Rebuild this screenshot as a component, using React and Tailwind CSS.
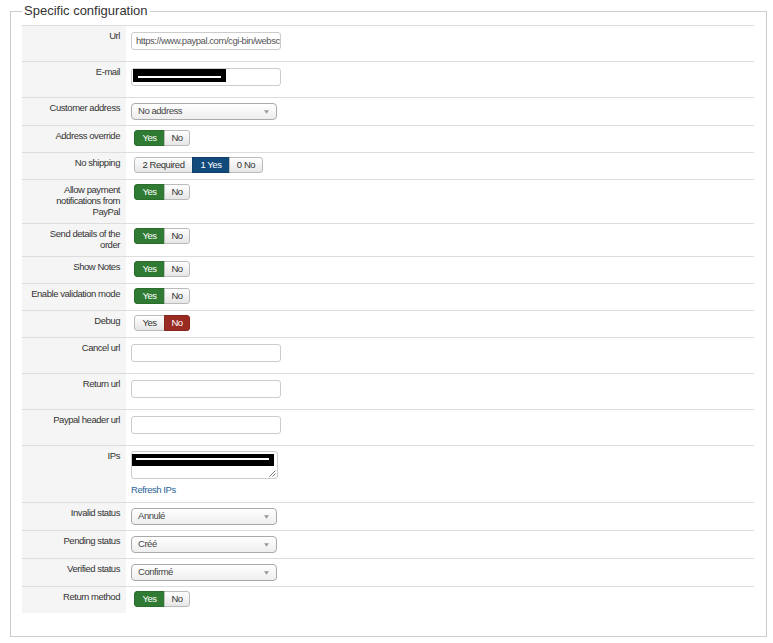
import React from 'react';

// Shared condensed text style for labels and controls
const small = "font-['Liberation_Sans',Arial,sans-serif] text-[9.5px] tracking-[-0.45px]";

function Row({ label, h, children }) {
  return (
    <div className={`flex border-t border-[#dddddd] ${h}`}>
      <div className={`w-[104px] shrink-0 whitespace-nowrap bg-[#f5f5f5] pr-[6px] pt-[4px] text-right leading-[11px] text-[#333] ${small}`}>
        {label}
      </div>
      <div className="flex-1 pl-[5px]">{children}</div>
    </div>
  );
}

function TextInput({ value, children }) {
  return (
    <div className={`mt-[6px] h-[18px] w-[150px] overflow-hidden whitespace-nowrap rounded-[3px] border border-[#cccccc] bg-white pl-[4px] leading-[15px] text-[#555] ${small}`}>
      {value}
      {children}
    </div>
  );
}

function Select({ value }) {
  return (
    <div className={`mt-[5px] flex h-[17px] w-[146px] items-center justify-between rounded-[4px] border border-[#aaaaaa] bg-gradient-to-b from-white to-[#eeeeee] pl-[6px] pr-[7px] text-[#444] ${small}`}>
      <span>{value}</span>
      <svg width="5" height="4" viewBox="0 0 6 4">
        <path d="M0 0 L6 0 L3 4 Z" fill="#999" />
      </svg>
    </div>
  );
}

function Toggle({ options }) {
  return (
    <div className="ml-[3px] mt-[4px] flex h-[16px]">
      {options.map((o, i) => {
        const tone =
          o.tone === 'green'
            ? 'bg-[#2f7b33] border-[#2a6d2d] text-white'
            : o.tone === 'blue'
            ? 'bg-[#124a7b] border-[#0f3f69] text-white'
            : o.tone === 'red'
            ? 'bg-[#992b23] border-[#87251f] text-white'
            : 'bg-gradient-to-b from-white to-[#e6e6e6] border-[#bbbbbb] text-[#333]';
        const round =
          i === 0 ? 'rounded-l-[3px]' : i === options.length - 1 ? 'rounded-r-[3px] -ml-px' : '-ml-px';
        return (
          <div
            key={i}
            style={{ width: o.w }}
            className={`flex items-center justify-center border leading-[14px] ${small} ${tone} ${round}`}
          >
            {o.text}
          </div>
        );
      })}
    </div>
  );
}

const yesOn = [
  { text: 'Yes', w: 31, tone: 'green' },
  { text: 'No', w: 26 },
];

export default function App() {
  return (
    <div className="h-[643px] w-[773px] overflow-hidden bg-white pt-[2px] font-['Liberation_Sans',Arial,sans-serif]">
      <fieldset className="ml-[10px] w-[757px] border border-[#cccccc] pb-[23px]">
        <legend className="ml-[11px] px-[2px] pb-[2px] pt-[1px] text-[13px] leading-[15px] text-[#333]">
          Specific configuration
        </legend>
        <div className="ml-[11px] mt-[5px] w-[732px]">
          <Row label="Url" h="h-[36px]">
            <TextInput value="https://www.paypal.com/cgi-bin/webscr" />
          </Row>
          <Row label="E-mail" h="h-[36px]">
            <div className="mt-[6px] h-[18px] w-[150px] rounded-[3px] border border-[#cccccc] bg-white">
              <div className="ml-px h-[13px] w-[93px] bg-black pt-[7px]">
                <div className="ml-[5px] h-[2px] w-[83px] bg-white" />
              </div>
            </div>
          </Row>
          <Row label="Customer address" h="h-[28px]">
            <Select value="No address" />
          </Row>
          <Row label="Address override" h="h-[27px]">
            <Toggle options={yesOn} />
          </Row>
          <Row label="No shipping" h="h-[27px]">
            <Toggle
              options={[
                { text: '2 Required', w: 59 },
                { text: '1 Yes', w: 38, tone: 'blue' },
                { text: '0 No', w: 34 },
              ]}
            />
          </Row>
          <Row
            label={
              <>
                Allow payment
                <br />
                notifications from
                <br />
                PayPal
              </>
            }
            h="h-[44px]"
          >
            <Toggle options={yesOn} />
          </Row>
          <Row
            label={
              <>
                Send details of the
                <br />
                order
              </>
            }
            h="h-[33px]"
          >
            <Toggle options={yesOn} />
          </Row>
          <Row label="Show Notes" h="h-[27px]">
            <Toggle options={yesOn} />
          </Row>
          <Row label="Enable validation mode" h="h-[27px]">
            <Toggle options={yesOn} />
          </Row>
          <Row label="Debug" h="h-[27px]">
            <Toggle
              options={[
                { text: 'Yes', w: 31 },
                { text: 'No', w: 26, tone: 'red' },
              ]}
            />
          </Row>
          <Row label="Cancel url" h="h-[36px]">
            <TextInput value="" />
          </Row>
          <Row label="Return url" h="h-[36px]">
            <TextInput value="" />
          </Row>
          <Row label="Paypal header url" h="h-[36px]">
            <TextInput value="" />
          </Row>
          <Row label="IPs" h="h-[57px]">
            <div className="relative mt-[5px] h-[28px] w-[147px] rounded-[3px] border border-[#cccccc] bg-white pt-[2px]">
              <div className="h-[12px] w-[142px] bg-black pt-[4px]">
                <div className="ml-[4px] h-[2px] w-[133px] bg-white" />
              </div>
              <svg className="absolute bottom-[1px] right-[1px]" width="7" height="7" viewBox="0 0 7 7">
                <path d="M6.5 0.5 L0.5 6.5 M6.5 3.5 L3.5 6.5" stroke="#777" strokeWidth="1" />
              </svg>
            </div>
            <div className={`mt-[5px] leading-[12px] text-[#2a6496] ${small}`}>Refresh IPs</div>
          </Row>
          <Row label="Invalid status" h="h-[28px]">
            <Select value="Annulé" />
          </Row>
          <Row label="Pending status" h="h-[28px]">
            <Select value="Créé" />
          </Row>
          <Row label="Verified status" h="h-[28px]">
            <Select value="Confirmé" />
          </Row>
          <Row label="Return method" h="h-[27px]">
            <Toggle options={yesOn} />
          </Row>
        </div>
      </fieldset>
    </div>
  );
}
